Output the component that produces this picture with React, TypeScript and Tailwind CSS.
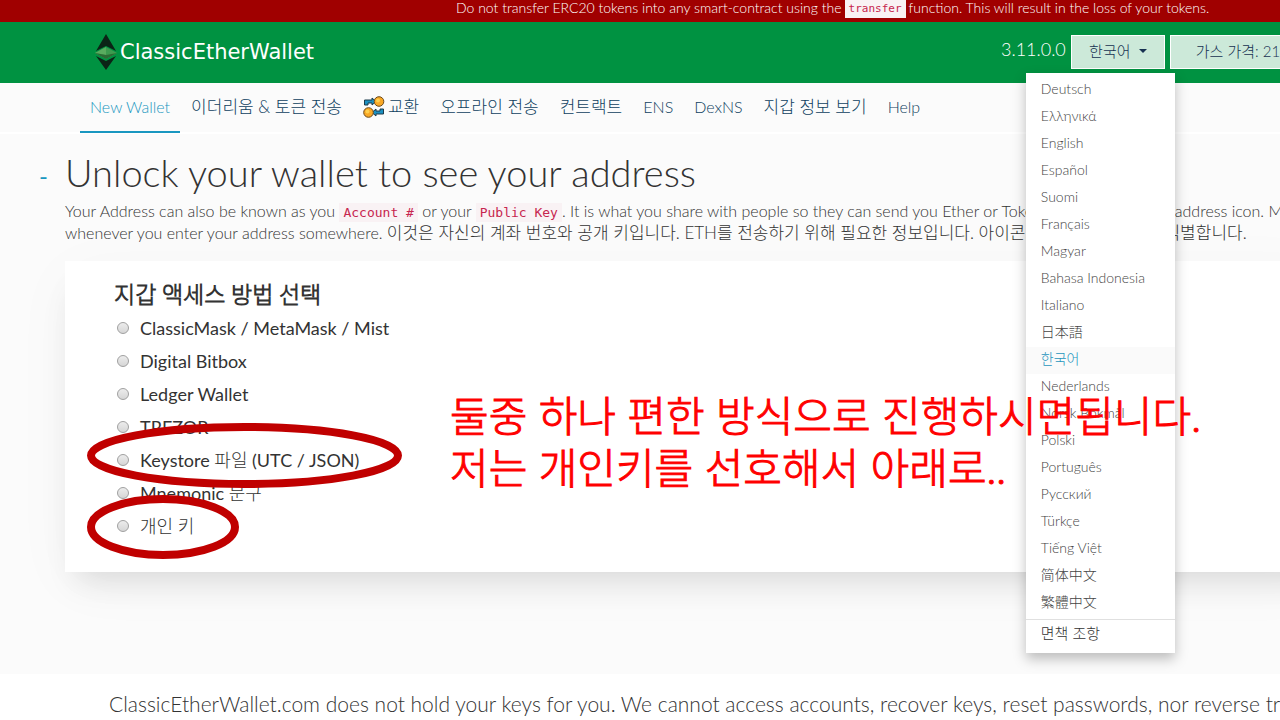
import React, { useState } from 'react';

interface Language {
    label: string;
    code: string;
}

const languages: Language[] = [
    { label: 'Deutsch', code: 'de' },
    { label: 'Ελληνικά', code: 'el' },
    { label: 'English', code: 'en' },
    { label: 'Español', code: 'es' },
    { label: 'Suomi', code: 'fi' },
    { label: 'Français', code: 'fr' },
    { label: 'Magyar', code: 'hu' },
    { label: 'Bahasa Indonesia', code: 'id' },
    { label: 'Italiano', code: 'it' },
    { label: '日本語', code: 'ja' },
    { label: '한국어', code: 'ko' },
    { label: 'Nederlands', code: 'nl' },
    { label: 'Norsk Bokmål', code: 'no' },
    { label: 'Polski', code: 'pl' },
    { label: 'Português', code: 'pt' },
    { label: 'Русский', code: 'ru' },
    { label: 'Türkçe', code: 'tr' },
    { label: 'Tiếng Việt', code: 'vi' },
    { label: '简体中文', code: 'zh-Hans' },
    { label: '繁體中文', code: 'zh-Hant' },
];

const tabs = [
    { label: 'New Wallet', size: 'text-base' },
    { label: '이더리움 & 토큰 전송', size: 'text-[17px]' },
    { label: '교환', size: 'text-[17px]' },
    { label: '오프라인 전송', size: 'text-[17px]' },
    { label: '컨트랙트', size: 'text-[17px]' },
    { label: 'ENS', size: 'text-base' },
    { label: 'DexNS', size: 'text-base' },
    { label: '지갑 정보 보기', size: 'text-[17px]' },
    { label: 'Help', size: 'text-base' },
];

const accessMethods = [
    'ClassicMask / MetaMask / Mist',
    'Digital Bitbox',
    'Ledger Wallet',
    'TREZOR',
    'Keystore 파일 (UTC / JSON)',
    'Mnemonic 문구',
    '개인 키',
];

function Logo() {
    return (
        <svg className="h-9 w-6" viewBox="0 0 24 36" aria-hidden="true">
            <path d="M12 0 L22 17 L12 12 L2 17 Z" fill="#0b2416" />
            <path d="M12 36 L2 22 L12 27 L22 22 Z" fill="#0b2416" />
            <path d="M12 13 L23 19 L12 25 L1 19 Z" fill="#3d9b4f" />
            <path d="M12 13 L12 21 L1 19 Z" fill="#59ab5f" />
            <path d="M12 21 L23 19 L12 25 L1 19 Z" fill="#2c6b35" />
        </svg>
    );
}

function SwapIcon() {
    return (
        <svg className="h-[22px] w-[22px]" viewBox="0 0 22 22" aria-hidden="true">
            <path d="M1.5 9 V4 H9 V2 L13 5.5 L9 9 V7 H5 V9 Z" fill="#1b8fc0" stroke="#1d3a4a" />
            <path d="M20.5 13 V18 H13 V20 L9 16.5 L13 13 V15 H17 V13 Z" fill="#1b8fc0" stroke="#1d3a4a" />
            <circle cx="16" cy="5.5" r="4.8" fill="#f9a825" stroke="#6b4a1c" />
            <circle cx="5.5" cy="16.5" r="4.8" fill="#f9a825" stroke="#6b4a1c" />
            <circle cx="15" cy="4.5" r="2" fill="#ffcf4d" />
            <circle cx="4.5" cy="15.5" r="2" fill="#ffcf4d" />
        </svg>
    );
}

function LanguageMenu({ current, onSelect }: { current: string; onSelect: (code: string) => void }) {
    return (
        <ul className="absolute -left-[45px] top-[38px] z-20 w-[149px] bg-white pt-1 pb-1.5 text-sm font-light text-[#444] shadow-[0_6px_12px_rgba(0,0,0,0.25)]">
            {languages.map((language) => (
                <li key={language.code}>
                    <a
                        href="#"
                        onClick={() => onSelect(language.code)}
                        className={`block h-[27px] px-[15px] leading-[23px] ${language.code === current ? 'bg-[#fafafa] text-[#1f95bd]' : ''}`}
                    >
                        {language.label}
                    </a>
                </li>
            ))}
            <li className="mt-0.5 border-t border-[#e0e0e0]">
                <a href="#" className="block h-[27px] px-[15px] text-[15px] leading-[27px] text-[#333]">면책 조항</a>
            </li>
        </ul>
    );
}

export default function App() {
    const [language, setLanguage] = useState('ko');
    const [activeTab, setActiveTab] = useState('New Wallet');
    const [method, setMethod] = useState('');

    return (
        <div className="relative min-h-screen overflow-hidden whitespace-nowrap bg-white font-[Lato,'Noto_Sans_CJK_KR_Light','Noto_Sans_CJK_KR',sans-serif] text-[#333]">
            {/* Warning banner */}
            <div className="flex h-[22px] gap-[3px] bg-[#a00000] pl-[456px] text-sm leading-4 font-light text-white">
                <span>Do not transfer ERC20 tokens into any smart-contract using the</span>
                <code className="h-[18px] bg-[#f9f2f4] px-1 font-['DejaVu_Sans_Mono',monospace] text-[11px] leading-[18px] font-normal text-[#c7254e]">transfer</code>
                <span>function. This will result in the loss of your tokens.</span>
            </div>

            {/* Header */}
            <header className="flex h-[61px] items-start justify-between bg-[#009241]">
                <a href="#" className="ml-[94px] mt-3 flex items-center gap-0.5 font-['DejaVu_Sans',sans-serif] text-[21px] leading-9 text-white">
                    <Logo />
                    ClassicEtherWallet
                </a>
                <div className="mt-[13px] flex w-[279px] shrink-0 items-start gap-[5px]">
                    <span className="text-lg leading-[29px] font-light text-white">3.11.0.0</span>
                    <div className="relative">
                        <button type="button" className="flex h-[34px] w-[94px] items-center justify-center gap-2 border border-white bg-[#cce9d9] pb-0.5 text-[15px] font-light text-[#163151]">
                            한국어
                            <svg className="h-1 w-2" viewBox="0 0 8 4" aria-hidden="true">
                                <path d="M0 0 H8 L4 4 Z" fill="currentColor" />
                            </svg>
                        </button>
                        <LanguageMenu current={language} onSelect={setLanguage} />
                    </div>
                    <button type="button" className="h-[34px] shrink-0 border border-white bg-[#cce9d9] px-[25px] pb-0.5 text-[15px] font-light text-[#163151]">
                        가스 가격: 21 Gwei
                    </button>
                </div>
            </header>

            <main className="bg-[#fbfbfb] pb-[102px]">
                {/* Tabs */}
                <nav className="flex h-[51px] gap-px border-b-2 border-white pl-20 font-light text-[#0f3f5f]">
                    {tabs.map(({ label, size }) => (
                        <a
                            key={label}
                            href="#"
                            onClick={() => setActiveTab(label)}
                            className={`flex h-[50px] items-center gap-[3px] border-b-2 px-2.5 ${size} ${label === activeTab ? 'border-[#1997c0] text-[#1997c0]' : 'border-transparent'}`}
                        >
                            {label === '교환' && <SwapIcon />}
                            {label}
                        </a>
                    ))}
                </nav>

                {/* Title and intro */}
                <div className="flex h-[66px] items-center pt-[10px]">
                    <button type="button" className="w-[65px] pr-[17px] pt-2 text-right text-2xl font-normal text-[#1997c0]">-</button>
                    <h1 className="text-[38px] leading-[50px] font-light">Unlock your wallet to see your address</h1>
                </div>
                <p className="pl-[65px] text-base leading-[22px] font-light">
                    Your Address can also be known as you{' '}
                    <code className="bg-[#f9f2f4] px-1 py-0.5 font-['DejaVu_Sans_Mono',monospace] text-[13px] leading-4 font-normal text-[#c7254e]">Account #</code>
                    {' '}or your{' '}
                    <code className="bg-[#f9f2f4] px-1 py-0.5 font-['DejaVu_Sans_Mono',monospace] text-[13px] leading-4 font-normal text-[#c7254e]">Public Key</code>
                    . It is what you share with people so they can send you Ether or Tokens. Find the colorful address icon. Make sure it matches your paper wallet &amp;
                    <br />
                    whenever you enter your address somewhere.{' '}
                    <span className="text-[17px]">이것은 자신의 계좌 번호와 공개 키입니다. ETH를 전송하기 위해 필요한 정보입니다. 아이콘으로 자신의 주소를 식별합니다.</span>
                </p>

                {/* Access method */}
                <section className="-mr-12 ml-[65px] mt-[17px] h-[311px] bg-white pl-[49px] pt-[17px] shadow-[0_20px_30px_-12px_rgba(0,0,0,0.12),0_12px_60px_rgba(0,0,0,0.03)]">
                    <h2 className="text-[23px] leading-[33px] font-bold">지갑 액세스 방법 선택</h2>
                    {accessMethods.map((name) => (
                        <label key={name} className="flex h-[33px] items-center text-lg">
                            <input
                                type="radio"
                                name="access-method"
                                checked={method === name}
                                onChange={() => setMethod(name)}
                                className="ml-[3px] mr-[11px] h-3 w-3 appearance-none rounded-full border border-[#a0a0a0] bg-linear-to-b from-[#ececec] to-[#d6d6d6] checked:bg-[#555]"
                            />
                            {name}
                        </label>
                    ))}
                </section>
            </main>

            <footer className="pl-[109px] pt-[15px] text-[21px] leading-[30px] font-light">
                ClassicEtherWallet.com does not hold your keys for you. We cannot access accounts, recover keys, reset passwords, nor reverse transactions.
            </footer>

            {/* Hand-drawn notes over the page */}
            <svg className="pointer-events-none absolute left-[87px] top-[423px] z-30 h-[137px] w-[316px]" viewBox="0 0 316 137" fill="none" stroke="#c00000" strokeWidth="8" aria-hidden="true">
                <ellipse cx="157.5" cy="32.5" rx="153.5" ry="28.5" />
                <ellipse cx="76" cy="104" rx="72" ry="28" />
            </svg>
            <p className="pointer-events-none absolute left-[450px] top-[390px] z-30 text-[42px] leading-[52px] font-light text-[#ff0000] [-webkit-text-stroke:1px_#ff0000]">
                둘중 하나 편한 방식으로 진행하시면됩니다.
                <br />
                저는 개인키를 선호해서 아래로..
            </p>
        </div>
    );
}
